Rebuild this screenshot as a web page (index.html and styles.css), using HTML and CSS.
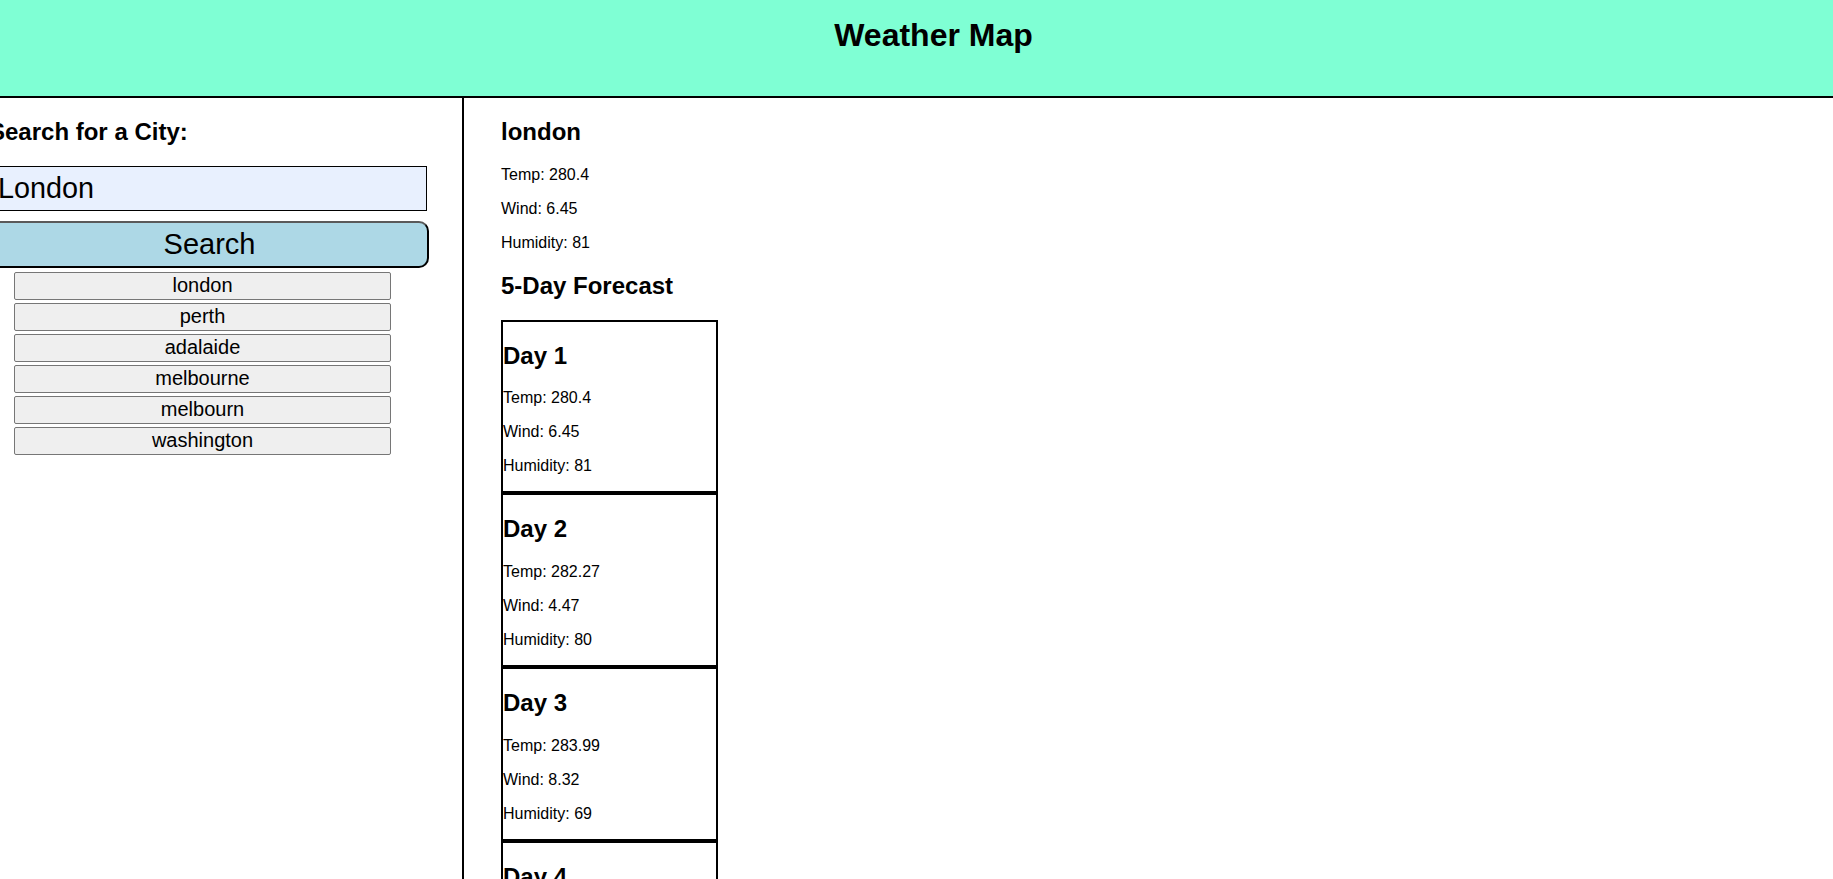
FILE: index.html
```html
<!DOCTYPE html>
<html lang="en">
<head>
<meta charset="utf-8">
<title>Weather Map</title>
<link rel="stylesheet" href="styles.css">
</head>
<body>
<header class="top">
  <h1 class="top-title">Weather Map</h1>
</header>
<main class="layout">
  <aside class="sidebar">
    <h2 class="sidebar-title">Search for a City:</h2>
    <form class="search">
      <input class="search-input" type="text" value="London">
      <button class="search-button" type="button">Search</button>
    </form>
    <div class="history">
      <button class="history-btn" type="button">london</button>
      <button class="history-btn" type="button">perth</button>
      <button class="history-btn" type="button">adalaide</button>
      <button class="history-btn" type="button">melbourne</button>
      <button class="history-btn" type="button">melbourn</button>
      <button class="history-btn" type="button">washington</button>
    </div>
  </aside>
  <section class="content">
    <h2 class="heading">london</h2>
    <p class="stat">Temp: 280.4</p>
    <p class="stat">Wind: 6.45</p>
    <p class="stat">Humidity: 81</p>
    <h2 class="heading">5-Day Forecast</h2>
    <div class="forecast">
      <div class="day-card">
        <h2 class="heading">Day 1</h2>
        <p class="stat">Temp: 280.4</p>
        <p class="stat">Wind: 6.45</p>
        <p class="stat">Humidity: 81</p>
      </div>
      <div class="day-card">
        <h2 class="heading">Day 2</h2>
        <p class="stat">Temp: 282.27</p>
        <p class="stat">Wind: 4.47</p>
        <p class="stat">Humidity: 80</p>
      </div>
      <div class="day-card">
        <h2 class="heading">Day 3</h2>
        <p class="stat">Temp: 283.99</p>
        <p class="stat">Wind: 8.32</p>
        <p class="stat">Humidity: 69</p>
      </div>
      <div class="day-card">
        <h2 class="heading">Day 4</h2>
        <p class="stat">Temp: 281.6</p>
        <p class="stat">Wind: 5.12</p>
        <p class="stat">Humidity: 74</p>
      </div>
      <div class="day-card">
        <h2 class="heading">Day 5</h2>
        <p class="stat">Temp: 279.85</p>
        <p class="stat">Wind: 3.9</p>
        <p class="stat">Humidity: 85</p>
      </div>
    </div>
  </section>
</main>
</body>
</html>
```
FILE: styles.css
```css
html, body {
  margin: 0;
  padding: 0;
  overflow: hidden;
}

body {
  font-family: "Liberation Sans", Arial, sans-serif;
  color: #000;
  background: #fff;
}

.top {
  background: #7fffd4;
  height: 79px;
  padding: 17px 0 0 34px;
  border-bottom: 2px solid #000;
  text-align: center;
}

.top-title {
  margin: 0;
  font-size: 32px;
  font-weight: bold;
}

.layout {
  display: flex;
  height: calc(100vh - 98px);
  overflow: hidden;
}

.sidebar {
  flex: 0 0 462px;
  border-right: 2px solid #000;
}

.sidebar-title {
  font-size: 24px;
  margin: 19.92px 0 19.92px -11px;
}

.search {
  margin: 0 0 0 -10px;
}

.search-input {
  display: block;
  box-sizing: border-box;
  width: 437px;
  height: 45px;
  margin: 0 0 10px 0;
  padding: 0 7px;
  border: 1px solid #000;
  background: #e8f0fe;
  font-family: "Liberation Sans", Arial, sans-serif;
  font-size: 28.8px;
  color: #000;
  outline: none;
}

.search-button {
  display: block;
  box-sizing: border-box;
  width: 439px;
  height: 47px;
  margin: 0;
  padding: 0;
  border: 2px solid #000;
  border-top-color: #5a5a5a;
  border-left-color: #5a5a5a;
  border-radius: 10px;
  background: #add8e6;
  font-family: "Liberation Sans", Arial, sans-serif;
  font-size: 29px;
  color: #000;
}

.history {
  display: flex;
  flex-direction: column;
  gap: 3px;
  width: 377px;
  margin: 4px 0 0 14px;
}

.history-btn {
  box-sizing: border-box;
  height: 28px;
  padding: 0 6px;
  border: 1px solid #767676;
  border-radius: 2px;
  background: #efefef;
  font-family: "Liberation Sans", Arial, sans-serif;
  font-size: 20px;
  color: #000;
}

.content {
  flex: 1;
  padding-left: 37px;
  overflow: hidden;
}

.heading {
  font-size: 24px;
  font-weight: bold;
  margin: 19.92px 0;
}

.stat {
  font-size: 16px;
  margin: 16px 0;
}

.forecast {
  display: flex;
  flex-direction: column;
}

.day-card {
  width: 213px;
  border: 2px solid #000;
}
```
